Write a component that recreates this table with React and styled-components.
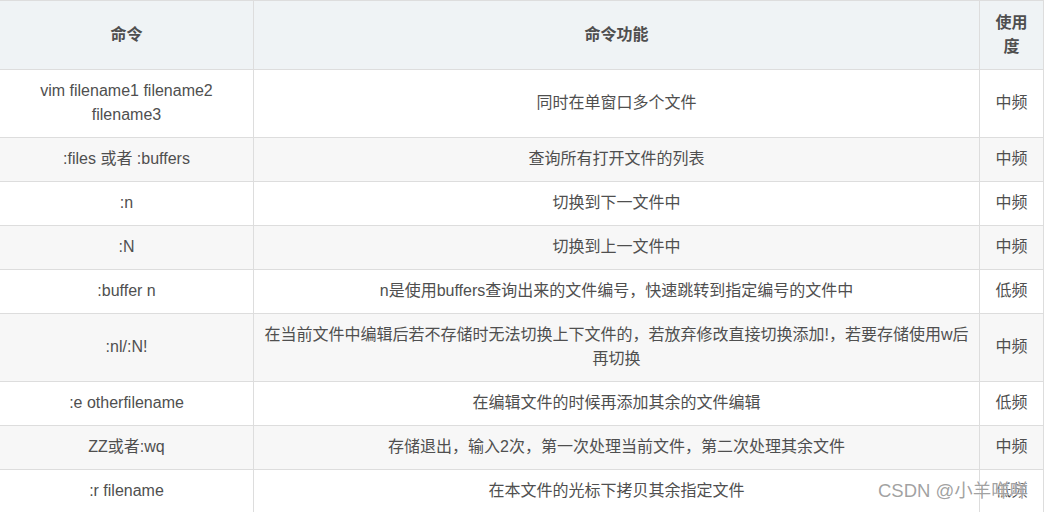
import styled, { createGlobalStyle } from 'styled-components';

const GlobalStyle = createGlobalStyle`
    html, body {
        margin: 0;
        padding: 0;
        background: #fff;
        overflow: hidden;
    }
    body {
        font-family: 'Liberation Sans', 'Noto Sans CJK SC', sans-serif;
        font-size: 16px;
        color: #4f4f4f;
    }
`;

const rows = [
    { cmd: 'vim filename1 filename2 filename3', desc: '同时在单窗口多个文件', use: '中频' },
    { cmd: ':files 或者 :buffers', desc: '查询所有打开文件的列表', use: '中频' },
    { cmd: ':n', desc: '切换到下一文件中', use: '中频' },
    { cmd: ':N', desc: '切换到上一文件中', use: '中频' },
    { cmd: ':buffer n', desc: 'n是使用buffers查询出来的文件编号，快速跳转到指定编号的文件中', use: '低频' },
    { cmd: ':nl/:N!', desc: '在当前文件中编辑后若不存储时无法切换上下文件的，若放弃修改直接切换添加!，若要存储使用w后再切换', use: '中频' },
    { cmd: ':e otherfilename', desc: '在编辑文件的时候再添加其余的文件编辑', use: '低频' },
    { cmd: 'ZZ或者:wq', desc: '存储退出，输入2次，第一次处理当前文件，第二次处理其余文件', use: '中频' },
    { cmd: ':r filename', desc: '在本文件的光标下拷贝其余指定文件', use: '低频' },
];

const App = () => {
    return (
        <Page>
            <GlobalStyle />
            <Table>
                <colgroup>
                    <col style={{ width: 254 }} />
                    <col style={{ width: 726 }} />
                    <col style={{ width: 64 }} />
                </colgroup>
                <thead>
                    <tr>
                        <HeadCell>命令</HeadCell>
                        <HeadCell>命令功能</HeadCell>
                        <HeadCell $narrow>使用度</HeadCell>
                    </tr>
                </thead>
                <tbody>
                    {rows.map((r, i) => (
                        <Row key={i} $striped={i % 2 === 1}>
                            <Cell>{r.cmd}</Cell>
                            <Cell>{r.desc}</Cell>
                            <Cell>{r.use}</Cell>
                        </Row>
                    ))}
                </tbody>
            </Table>
            {/* site watermark stamped over the corner of the table */}
            <Watermark>CSDN @小羊咩咩</Watermark>
        </Page>
    );
};

const Page = styled.div`
    position: relative;
    width: 1046px;
    height: 512px;
    overflow: hidden;
`;

const Table = styled.table`
    width: 1044px;
    table-layout: fixed;
    border-collapse: separate;
    border-spacing: 0;
    border-top: 1px solid #dddddd;
`;

const HeadCell = styled.th`
    box-sizing: border-box;
    background: #eff3f5;
    font-weight: bold;
    color: #4f4f4f;
    line-height: 24px;
    padding: ${(p) => (p.$narrow ? '10px 12px' : '10px 8px')};
    text-align: center;
    border-right: 1px solid #dddddd;
    border-bottom: 1px solid #dddddd;
`;

const Row = styled.tr`
    background: ${(p) => (p.$striped ? '#f7f7f7' : '#ffffff')};
`;

const Cell = styled.td`
    box-sizing: border-box;
    line-height: 24px;
    padding: 9px 8px 10px;
    text-align: center;
    color: #4f4f4f;
    border-right: 1px solid #dddddd;
    border-bottom: 1px solid #dddddd;
    word-break: break-word;
`;

const Watermark = styled.div`
    position: absolute;
    left: 878px;
    top: 479px;
    font-family: 'Liberation Sans', 'Noto Sans CJK SC', sans-serif;
    font-size: 18.5px;
    line-height: 24px;
    color: rgba(120, 120, 120, 0.7);
    text-shadow: 0 0 2px #fff, 0 0 1px #fff;
    white-space: nowrap;
`;

export default App;
